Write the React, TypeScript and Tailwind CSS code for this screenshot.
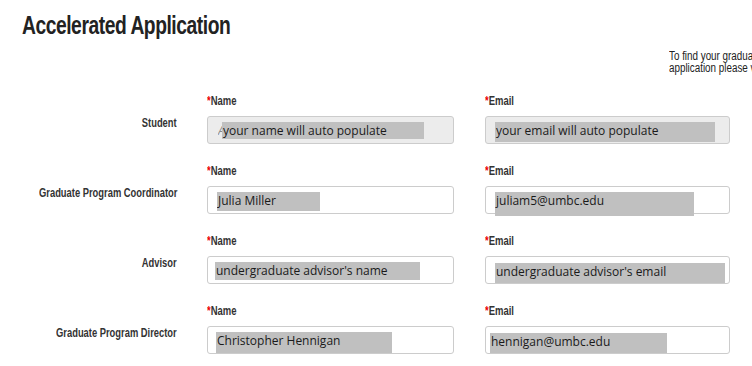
import type { ReactNode } from "react";

type Field = {
  value: string;
  hlLeft: string;
  hlTop: string;
  hlWidth: string;
  hlHeight: string;
  prefix?: boolean;
};

type Row = {
  label: string;
  disabled?: boolean;
  name: Field;
  email: Field;
};

const rows: Row[] = [
  {
    label: "Student",
    disabled: true,
    name: { value: "your name will auto populate", hlLeft: "ml-0", hlTop: "mt-[5px]", hlWidth: "w-[202px]", hlHeight: "h-[17px]", prefix: true },
    email: { value: "your email will auto populate", hlLeft: "ml-[8px]", hlTop: "mt-[5px]", hlWidth: "w-[220px]", hlHeight: "h-[20px]" },
  },
  {
    label: "Graduate Program Coordinator",
    name: { value: "Julia Miller", hlLeft: "ml-[8px]", hlTop: "mt-[5px]", hlWidth: "w-[103px]", hlHeight: "h-[19px]" },
    email: { value: "juliam5@umbc.edu", hlLeft: "ml-[8px]", hlTop: "mt-[5px]", hlWidth: "w-[199px]", hlHeight: "h-[24px]" },
  },
  {
    label: "Advisor",
    name: { value: "undergraduate advisor's name", hlLeft: "ml-[6px]", hlTop: "mt-[5px]", hlWidth: "w-[205px]", hlHeight: "h-[18px]" },
    email: { value: "undergraduate advisor's email", hlLeft: "ml-[8px]", hlTop: "mt-[6px]", hlWidth: "w-[230px]", hlHeight: "h-[20px]" },
  },
  {
    label: "Graduate Program Director",
    name: { value: "Christopher Hennigan", hlLeft: "ml-[7px]", hlTop: "mt-[5px]", hlWidth: "w-[176px]", hlHeight: "h-[21px]" },
    email: { value: "hennigan@umbc.edu", hlLeft: "ml-[3px]", hlTop: "mt-[6px]", hlWidth: "w-[177px]", hlHeight: "h-[20px]" },
  },
];

// no narrow face installed, so squeeze Liberation Sans horizontally
const cond = "font-['Liberation_Sans',Arial,sans-serif]";

function FieldLabel({ children }: { children: ReactNode }) {
  return (
    <div className="h-[22px] flex items-start">
      <span
        className={`${cond} inline-block origin-left scale-x-[0.79] whitespace-nowrap text-[12px] leading-[14px] font-bold text-[#333]`}
      >
        <span className="text-[#e00]">*</span>
        {children}
      </span>
    </div>
  );
}

function Box({ field, disabled }: { field: Field; disabled?: boolean }) {
  return (
    <div
      className={`h-[28px] rounded-[3px] border border-[#cccccc] flex items-start pl-[1px] ${
        disabled ? "bg-[#ececec]" : "bg-white"
      }`}
    >
      {field.prefix && (
        <span className="mt-[5px] ml-[9px] w-[4px] overflow-hidden text-[12px] leading-[17px] italic text-[#8a8a8a] font-['Open_Sans',sans-serif]">
          A
        </span>
      )}
      <span
        className={`${field.hlLeft} ${field.hlTop} ${field.hlWidth} ${field.hlHeight} bg-[#c0c0c0] flex items-start pl-[1px] pt-[1px] font-['Open_Sans','Noto_Sans',sans-serif] text-[12px] leading-[16px] text-[#1a1a1a] whitespace-nowrap overflow-hidden`}
      >
        {field.value}
      </span>
    </div>
  );
}

export default function App() {
  return (
    <div className="w-[752px] h-[366px] bg-white overflow-hidden">
      <div className="pt-[11px] pl-[22px] h-[39px] flex items-start">
        <h1
          className={`${cond} inline-block origin-left scale-x-[0.74] whitespace-nowrap text-[26px] leading-[28px] font-bold text-[#222] tracking-[-0.6px]`}
        >
          Accelerated Application
        </h1>
      </div>

      <div className="pl-[669px] mt-[11px] whitespace-nowrap h-[24px] flex items-start">
        <div className={`${cond} inline-block origin-left scale-x-[0.82] text-[12px] leading-[12px] text-[#222]`}>
          <p>To find your graduate program</p>
          <p>application please visit</p>
        </div>
      </div>

      <div className="mt-[20px] flex flex-col gap-[20px]">
        {rows.map((r) => (
          <div key={r.label} className="grid grid-cols-[177px_247px_246px] gap-x-[30px] h-[50px]">
            <div className="pt-[21px] flex items-start justify-end">
              <span
                className={`${cond} inline-block origin-right scale-x-[0.78] whitespace-nowrap text-[12px] leading-[16px] font-bold text-[#333]`}
              >
                {r.label}
              </span>
            </div>
            <div>
              <FieldLabel>Name</FieldLabel>
              <Box field={r.name} disabled={r.disabled} />
            </div>
            <div className="ml-[1px]">
              <FieldLabel>Email</FieldLabel>
              <Box field={r.email} disabled={r.disabled} />
            </div>
          </div>
        ))}
      </div>
    </div>
  );
}
